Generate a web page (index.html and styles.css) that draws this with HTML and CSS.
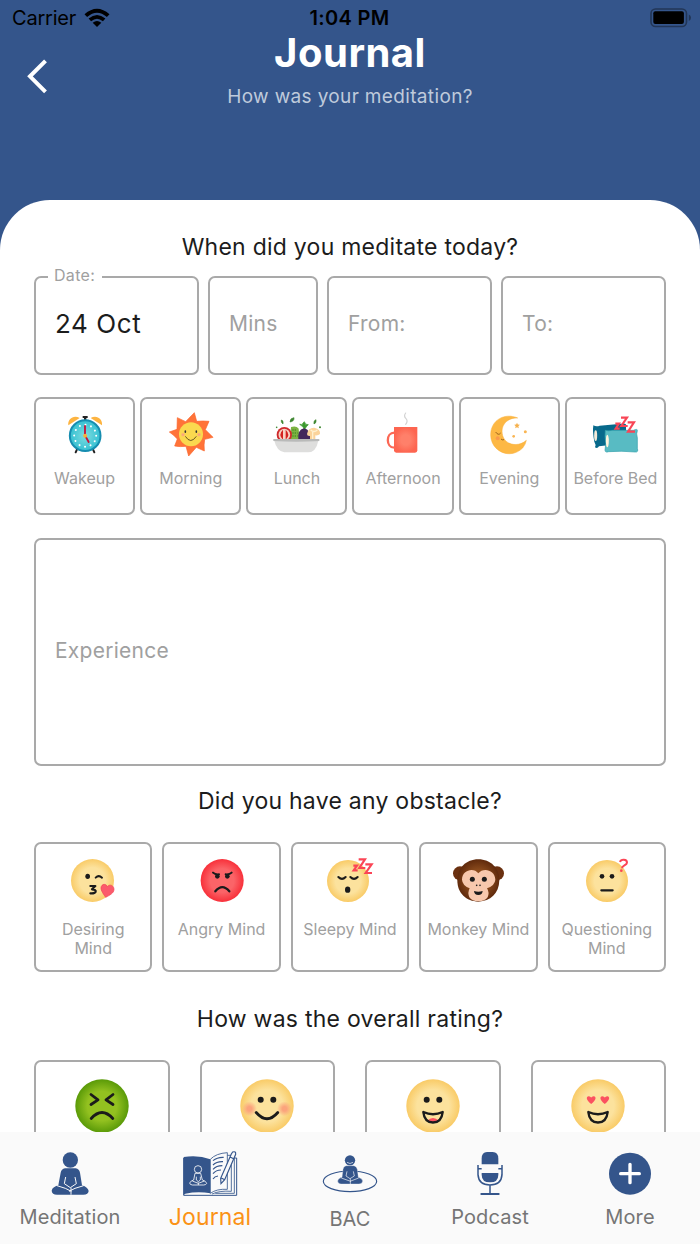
FILE: index.html
```html
<!DOCTYPE html>
<html lang="en">
<head>
  <meta charset="UTF-8" />
  <meta name="viewport" content="width=device-width, initial-scale=1.0" />
  <title>Journal</title>
  <link rel="stylesheet" href="styles.css">
</head>
<body>
  <svg class="defs" width="0" height="0" aria-hidden="true">
    <defs>
      <radialGradient id="yellow"><stop offset="0.6" stop-color="#fce29d" /><stop offset="1" stop-color="#f9cb67" /></radialGradient>
      <radialGradient id="red"><stop offset="0.55" stop-color="#fb6468" /><stop offset="1" stop-color="#f8303a" /></radialGradient>
      <radialGradient id="green"><stop offset="0.55" stop-color="#93c120" /><stop offset="1" stop-color="#5a9a08" /></radialGradient>
      <radialGradient id="blush"><stop offset="0.3" stop-color="#fba47c" /><stop offset="1" stop-color="#fba47c" stop-opacity="0" /></radialGradient>
      <radialGradient id="dial"><stop offset="0" stop-color="#7fdcdf" /><stop offset="1" stop-color="#35c0d2" /></radialGradient>
      <radialGradient id="mug"><stop offset="0.4" stop-color="#ff806a" /><stop offset="1" stop-color="#fd6550" /></radialGradient>
      <radialGradient id="fur"><stop offset="0.5" stop-color="#8a4a1c" /><stop offset="1" stop-color="#602a0c" /></radialGradient>
    </defs>
  </svg>

  <header>
    <div class="status">
      <div class="carrier">
        <span>Carrier</span>
        <svg width="26" height="20" viewBox="0 0 26 20">
          <path d="M0.5 6.2 Q13 -4.8 25.5 6.2 L22.9 9 Q13 0.3 3.1 9 Z" />
          <path d="M4.6 10.5 Q13 3.4 21.4 10.5 L18.9 13.2 Q13 8.2 7.1 13.2 Z" />
          <path d="M8.7 14.8 Q13 11.2 17.3 14.8 L13 19 Z" />
        </svg>
      </div>
      <span class="clock">1:04 PM</span>
      <svg class="battery" width="42" height="20" viewBox="0 0 42 20">
        <rect x="1" y="1" width="35.5" height="17.5" rx="4.5" fill="none" stroke="#223657" stroke-width="1.6" />
        <rect x="3.3" y="3.3" width="30.6" height="12.6" rx="2" />
        <path d="M38.8 6.5 Q41 7.5 41 9.7 Q41 12 38.8 13 Z" fill="#223657" />
      </svg>
    </div>
    <div class="title-row">
      <svg class="back" width="22" height="36" viewBox="0 0 22 36">
        <path d="M19.5 2.8 L4 18.3 L19.5 33.8" fill="none" stroke="#fff" stroke-width="4" />
      </svg>
      <div class="titles">
        <h1>Journal</h1>
        <p>How was your meditation?</p>
      </div>
    </div>
  </header>

  <main>
    <h2>When did you meditate today?</h2>
    <div class="fields">
      <div class="field filled"><span class="label">Date:</span>24 Oct</div>
      <div class="field">Mins</div>
      <div class="field">From:</div>
      <div class="field">To:</div>
    </div>

    <div class="times">
      <div class="card">
        <svg viewBox="89 66 150 138">
          <path d="M140 178 L136 187 M188 178 L192 187" stroke="#222" stroke-width="6" stroke-linecap="round" />
          <path d="M114 106 C111 86 131 73 148 84 Z M215 106 C218 86 198 73 181 84 Z" fill="#fdb441" />
          <path d="M157 78 H172 V84 H168 V91 H161 V84 H157 Z" fill="#222" />
          <circle cx="164.500" cy="137" r="46" fill="url(#dial)" stroke="#168db0" stroke-width="6" />
          <circle cx="164.500" cy="137" r="33" fill="none" stroke="#fff" stroke-width="6" stroke-linecap="round" stroke-dasharray="0.1 17.18" />
          <path d="M164 137 V108 M165 138 L175 156" stroke="#c5133b" stroke-width="5.500" stroke-linecap="round" />
          <circle cx="164.500" cy="137" r="6" fill="#f7b13b" />
        </svg>
        <span>Wakeup</span>
      </div>
      <div class="card">
        <svg viewBox="407 66 150 138">
          <path d="M492 68 L499 94 Q517 92 536 94 L525 119 L548 142 L523 148 Q520 164 522 183 L498 172 L475 198 L467 169 Q449 171 433 168 L441 147 Q431 135 417 126 L440 118 L441 83 L466 95 Q479 81 492 68 Z" fill="#ff7338" stroke="#fa632b" stroke-width="2" stroke-linejoin="round" />
          <circle cx="482" cy="133" r="36" fill="#fad94f" />
          <circle cx="458" cy="134" r="7" fill="url(#blush)" /><circle cx="506" cy="134" r="7" fill="url(#blush)" />
          <ellipse cx="465" cy="125" rx="2.500" ry="4" fill="#333" /><ellipse cx="498" cy="125" rx="2.500" ry="4" fill="#333" />
          <path d="M465 139 Q481 164 498 139" fill="none" stroke="#4a3a18" stroke-width="2.500" />
        </svg>
        <span>Morning</span>
      </div>
      <div class="card">
        <svg viewBox="95 66 150 138">
          <path d="M152 111 Q168 106 175 116 L178 150 H150 Z" fill="#7cb342" />
          <path d="M156 120 h14 M156 129 h16 M156 138 h16" stroke="#4f8f28" stroke-width="4" stroke-dasharray="4 3" />
          <circle cx="132" cy="134" r="23" fill="#cf2a2c" />
          <circle cx="132" cy="134" r="17.500" fill="#f7d3c4" />
          <path d="M128 119 Q112 134 128 149 Z M136 119 Q152 134 136 149 Z" fill="#d4231f" />
          <path d="M191 117 C188 108 183 108 178 103 Q185 101 187 107 Q184 100 192 95 Q198 101 194 107 Q198 100 204 104 Q197 110 194 117 Z" fill="#3c9a2f" stroke="#3c9a2f" stroke-width="2" />
          <path d="M174 150 Q170 120 191 115 Q213 120 209 150 Z" fill="#43275b" />
          <path d="M200 132 Q204 112 222 113 Q241 117 239 132 Q234 137 225 136 V150 H209 V138 Q200 139 200 132 Z" fill="#fbd39a" />
          <path d="M211 120 q10 9 20 0 M217 126 v22" fill="none" stroke="#fff0ce" stroke-width="4" />
          <path d="M149 96 Q149 84 161 83 Q162 94 149 96 M123 90 q7 1 5 12 q-7 -4 -5 -12 M227 89 q-8 2 -6 13 q8 -3 6 -13" fill="#3e8631" stroke="#3e8631" stroke-width="2" />
          <circle cx="109" cy="112" r="2.500" fill="#3e8631" /><circle cx="239" cy="112" r="3" fill="#3e8631" />
          <path d="M102 152 H234 Q227 187 203 187 H132 Q109 183 102 152 Z" fill="#dededd" />
          <path d="M99 147 H237 V153 Q168 158 99 153 Z" fill="#b9bab9" />
        </svg>
        <span>Lunch</span>
      </div>
      <div class="card">
        <svg viewBox="413 66 150 138">
          <path d="M496 69 Q489 78 497 86 Q504 93 496 103" fill="none" stroke="#d2d2d2" stroke-width="3.500" stroke-linecap="round" />
          <path d="M462 128 C436 128 436 173 462 173" fill="none" stroke="#fc6855" stroke-width="7" />
          <path d="M461 111 H531 V181 Q531 188 524 188 H468 Q461 188 461 181 Z" fill="url(#mug)" />
        </svg>
        <span>Afternoon</span>
      </div>
      <div class="card">
        <svg viewBox="87 66 150 138">
          <path d="M188 84 C148 67 107 91 107 134 C107 184 165 211 203 174 Q212 163 214 151 C194 170 153 169 143 137 C134 105 159 82 188 84 Z" fill="#fdb844" stroke="#f9ad35" stroke-width="1.500" />
          <path d="M186 98 l2.500 5.500 6 0.500 -4.500 4.500 1.500 6 -5.500 -3 -5.500 3 1.500 -6 -4.500 -4.500 6 -0.500 Z" fill="#f6b04a" />
          <circle cx="211" cy="125" r="4.500" fill="#f9b553" /><circle cx="176" cy="139" r="4" fill="#f9b553" />
          <circle cx="128" cy="145" r="6" fill="#fa9a4c" />
          <path d="M122 126 Q130 138 137 129 M138 147 Q141 151 147 149" fill="none" stroke="#8a5314" stroke-width="2.500" />
        </svg>
        <span>Evening</span>
      </div>
      <div class="card">
        <svg viewBox="405 66 150 138">
          <path d="M415 106 Q424 111 434 107 L499 101 Q514 98 513 106 V165 Q460 164 432 169 Q427 177 420 172 Q424 164 418 155 Q412 125 415 106 Z" fill="#07698b" />
          <ellipse cx="422" cy="137" rx="4.500" ry="16" fill="#f4ead8" />
          <path d="M451 121 Q460 124 472 121 H535 Q548 115 547 122 Q543 130 547 144 V175 Q551 187 541 186 Q500 182 461 185 Q450 189 450 180 Q455 160 450 140 Z" fill="#58bbc3" stroke="#319eab" stroke-width="2" />
          <ellipse cx="457" cy="153" rx="4.500" ry="19" fill="#fff4dd" />
          <path d="M481 101 h11 l-10 15 h12 M498 83 h18 l-17 25 h19 M518 97 h19 l-18 28 h21" fill="none" stroke="#f84556" stroke-width="6.500" />
        </svg>
        <span>Before Bed</span>
      </div>
    </div>

    <div class="field experience">Experience</div>

    <h2>Did you have any obstacle?</h2>
    <div class="obstacles">
      <div class="card">
        <svg viewBox="105 66 168 144">
          <circle cx="187.500" cy="136.500" r="64.500" fill="url(#yellow)" />
          <ellipse cx="173" cy="124" rx="7" ry="8" fill="#1b1b1b" />
          <path d="M197 128 Q206 119 216 128" fill="none" stroke="#1b1b1b" stroke-width="6" stroke-linecap="round" />
          <path d="M181 153 H196 L186 163 Q199 164 197 170 Q194 176 181 175" fill="none" stroke="#1b1b1b" stroke-width="6.500" stroke-linecap="round" stroke-linejoin="round" />
          <path d="M227 187 C218 174 210 163 214 154 C219 145 229 147 232 155 C239 146 252 151 252 163 C252 175 238 181 227 187 Z" fill="#fb5a6c" stroke="#f2414f" stroke-width="2" />
        </svg>
        <span>Desiring<br>Mind</span>
      </div>
      <div class="card">
        <svg viewBox="490 66 168 144">
          <circle cx="574.500" cy="136.500" r="64.500" fill="url(#red)" />
          <path d="M547 113 Q553 119 565 118 M603 113 Q597 119 585 118" fill="none" stroke="#1b1b1b" stroke-width="6" stroke-linecap="round" />
          <ellipse cx="560" cy="124" rx="7" ry="7" fill="#1b1b1b" /><ellipse cx="590" cy="124" rx="7" ry="7" fill="#1b1b1b" />
          <path d="M554 169 Q575 144 596 169" fill="none" stroke="#1b1b1b" stroke-width="7" stroke-linecap="round" />
        </svg>
        <span>Angry Mind</span>
      </div>
      <div class="card">
        <svg viewBox="111 66 168 144">
          <circle cx="189" cy="138" r="63" fill="url(#yellow)" />
          <path d="M160 126 Q171 137 182 126 M196 126 Q207 137 218 126" fill="none" stroke="#1b1b1b" stroke-width="6" stroke-linecap="round" />
          <ellipse cx="188" cy="164" rx="8" ry="9.500" fill="#1b1b1b" />
          <path d="M205 92 h11 l-10 14 h12 M221 73 h19 l-17 26 h18 M241 88 h19 l-18 26 h19" fill="none" stroke="#fb4556" stroke-width="6.500" />
        </svg>
        <span>Sleepy Mind</span>
      </div>
      <div class="card">
        <svg viewBox="495 66 168 144">
          <circle cx="525" cy="115" r="21" fill="#6a3010" /><circle cx="636" cy="115" r="21" fill="#6a3010" />
          <path d="M580 73 C617 73 643 99 643 136 C642 176 616 199 580 200 C544 199 517 176 517 136 C517 99 543 73 580 73 Z" fill="url(#fur)" />
          <path d="M580 115 C567 96 531 104 531 134 Q532 151 554 160 Q547 173 553 187 Q561 199 580 199 Q600 199 608 187 Q614 172 606 160 Q630 151 631 134 C630 104 594 96 580 115 Z" fill="#f7c8ad" />
          <circle cx="562" cy="133" r="7.500" fill="#1b1b1b" /><circle cx="598" cy="133" r="7.500" fill="#1b1b1b" />
          <circle cx="575" cy="151" r="2.500" fill="#1b1b1b" /><circle cx="585" cy="151" r="2.500" fill="#1b1b1b" />
          <path d="M567 168 Q580 172 593 168 Q592 180 580 180 Q568 180 567 168 Z" fill="#1b1b1b" />
        </svg>
        <span>Monkey Mind</span>
      </div>
      <div class="card">
        <svg viewBox="880 66 168 144">
          <circle cx="964" cy="138" r="63" fill="url(#yellow)" />
          <circle cx="949" cy="124" r="7" fill="#1b1b1b" /><circle cx="979" cy="124" r="7" fill="#1b1b1b" />
          <path d="M947 166 H981" stroke="#1b1b1b" stroke-width="6.500" stroke-linecap="round" />
          <path d="M1003 81 C1006 72 1024 72 1024 83 C1023 92 1009 91 1009 100" fill="none" stroke="#fb4556" stroke-width="6" />
          <circle cx="1007" cy="107" r="4" fill="#fb4556" />
        </svg>
        <span>Questioning<br>Mind</span>
      </div>
    </div>

    <h2>How was the overall rating?</h2>
    <div class="ratings">
      <div class="card">
        <svg viewBox="0 0 56 56">
          <circle cx="28" cy="28" r="26.700" fill="url(#green)" />
          <path d="M17 16.500 L24 21.800 L17 26.500 M39 16.500 L32 21.800 L39 26.500 M17.200 40.500 Q28 28.500 38.800 40.500" class="line" />
        </svg>
      </div>
      <div class="card">
        <svg viewBox="0 0 56 56">
          <circle cx="28" cy="28" r="26.700" fill="url(#yellow)" />
          <circle cx="10.500" cy="30.800" r="7.500" fill="url(#blush)" /><circle cx="45.500" cy="30.800" r="7.500" fill="url(#blush)" />
          <circle cx="21.700" cy="21.700" r="3" /><circle cx="34.300" cy="21.700" r="3" />
          <path d="M17.200 34.500 Q28 47 38.800 34.500" class="line" />
        </svg>
      </div>
      <div class="card">
        <svg viewBox="0 0 56 56">
          <circle cx="28" cy="28" r="26.700" fill="url(#yellow)" />
          <circle cx="21.700" cy="21.700" r="3" /><circle cx="34.300" cy="21.700" r="3" />
          <path d="M22 43 Q28 37 34 43 Q28 46 22 43 Z" fill="#fb5160" />
          <path d="M18.300 34 Q28 38.500 37.700 34 Q36.500 44.500 28 44.500 Q19.500 44.500 18.300 34 Z" class="line mouth" />
        </svg>
      </div>
      <div class="card">
        <svg viewBox="0 0 56 56">
          <circle cx="28" cy="28" r="26.700" fill="url(#yellow)" />
          <path d="M21.200 26 C14 21 17 16 21.200 19.500 C25.400 16 28.400 21 21.200 26 Z M34.800 26 C27.600 21 30.600 16 34.800 19.500 C39 16 42 21 34.800 26 Z" fill="#fb5160" />
          <path d="M18.300 34 Q28 38.500 37.700 34 Q36.500 44.500 28 44.500 Q19.500 44.500 18.300 34 Z" class="line mouth" />
        </svg>
      </div>
    </div>
  </main>

  <nav>
    <a>
      <svg viewBox="120 60 180 144">
        <circle cx="211" cy="90" r="23" />
        <path d="M195 115 H227 Q238 117 240 128 L246 166 Q264 172 266 183 Q265 194 250 194 H171 Q156 194 155 182 Q157 171 175 166 L182 128 Q184 117 195 115 Z" />
        <path d="M197 141 L193 161 L211 173 L229 161 L225 141 M171 167 L196 175 L214 184 M251 167 L225 175 L207 184 M213 173 V194" class="cut" />
      </svg>
      <span>Meditation</span>
    </a>
    <a class="active">
      <svg viewBox="540 60 180 144">
        <path d="M551 84 V196 H710 V84 H700" fill="none" stroke="#34558b" stroke-width="3" />
        <path d="M551 81 Q595 74 631 88 V190 Q595 183 556 191 L551 195 Z" />
        <path d="M631 88 Q648 70 682 68 V178 Q650 176 631 190 Z M682 76 H694 V184 Q660 181 636 192 M694 82 H703 V190 H646" fill="#fafafa" stroke="#34558b" stroke-width="2.500" />
        <path d="M639 92 Q652 81 671 82 M639 105 Q650 94 669 95 M639 118 Q649 107 667 107 M639 131 Q648 120 663 120 M639 147 Q644 139 654 138" fill="none" stroke="#34558b" stroke-width="3.500" />
        <path d="M698 66 Q708 63 707 73 L674 149 L663 161 L662 145 L694 72 Z M664 144 L674 149 M690 81 L701 86" fill="#fafafa" stroke="#34558b" stroke-width="3.500" />
        <g fill="none" stroke="#fafafa" stroke-width="2.500">
          <circle cx="594" cy="118" r="11" />
          <path d="M585 130 H602 L607 150 Q618 153 620 160 Q618 165 611 165 H577 Q569 164 569 159 Q572 152 581 150 Z M589 140 V150 L595 155 L601 150 V140 M577 153 L595 160 L613 153 M595 158 V165" />
        </g>
      </svg>
      <span>Journal</span>
    </a>
    <a class="bac">
      <svg viewBox="60 60 180 144">
        <ellipse cx="150" cy="154" rx="80" ry="31" fill="none" stroke="#34558b" stroke-width="3.500" />
        <circle cx="150" cy="91" r="15.500" />
        <path d="M138 107 H162 Q170 109 172 118 L175 142 Q187 146 188 153 Q187 162 177 162 H123 Q113 161 113 153 Q114 145 126 142 L129 118 Q130 109 138 107 Z" stroke="#fafafa" stroke-width="1" />
        <path d="M141 97 Q150 104 159 97 M141 124 L138 138 L150 146 L163 138 L160 124 M124 144 L152 154 M176 144 L150 154 M151 146 V162" class="cut thin" />
      </svg>
      <span>BAC</span>
    </a>
    <a>
      <svg viewBox="480 60 180 144">
        <path d="M545 103 V86 Q545 66 561 66 H578 Q595 66 595 86 V103 Z" />
        <path d="M545 129 H595 V134 Q595 157 570 157 Q545 157 545 134 Z" />
        <path d="M534 105 V134 Q536 165 570 165 Q604 165 606 134 V105 M534 116 H545 M606 116 H595 M570 165 V191" fill="none" stroke="#34558b" stroke-width="4.500" />
        <path d="M544 192 H596" stroke="#34558b" stroke-width="6" stroke-linecap="round" />
      </svg>
      <span>Podcast</span>
    </a>
    <a>
      <svg viewBox="900 60 180 144">
        <circle cx="990" cy="131" r="63" />
        <path d="M990 103 V158 M962 131 H1018" stroke="#fff" stroke-width="10" stroke-linecap="round" />
      </svg>
      <span>More</span>
    </a>
  </nav>
</body>
</html>
```
FILE: styles.css
```css
* {
  box-sizing: border-box;
}
body {
  margin: 0;
  height: 1244px;
  display: flex;
  flex-direction: column;
  overflow: hidden;
  background: #34558b;
  color: #1c1c1c;
  font-family: Inter, Roboto, sans-serif;
}
.defs {
  position: absolute;
}
header {
  height: 200px;
  flex: none;
}
.status {
  display: grid;
  grid-template-columns: 1fr auto 1fr;
  align-items: center;
  height: 36px;
  padding: 0 8px 0 12px;
  color: #000;
  font-size: 20px;
}
.carrier {
  display: flex;
  align-items: center;
  gap: 8px;
  letter-spacing: -0.2px;
}
.clock {
  margin-right: 5px;
  font-weight: 600;
  letter-spacing: 0.3px;
}
.battery {
  justify-self: end;
}
.title-row {
  display: grid;
  grid-template-columns: 60px 1fr 60px;
}
.back {
  margin: 22px 0 0 26px;
}
.titles {
  text-align: center;
}
h1 {
  margin: 0;
  color: #fff;
  font-size: 40px;
  line-height: 34px;
  font-weight: 700;
  letter-spacing: 0.5px;
}
.titles p {
  margin: 15px 0 0;
  color: #bfcadb;
  font-size: 19px;
  line-height: 24px;
  letter-spacing: 0.35px;
}

main {
  flex: 1;
  min-height: 0;
  overflow: hidden;
  padding: 32px 34px 0;
  background: #fff;
  border-radius: 50px 50px 0 0;
}
h2 {
  margin: 0;
  font-size: 23px;
  line-height: 30px;
  font-weight: 400;
  text-align: center;
  letter-spacing: 0.25px;
}
.fields {
  display: grid;
  grid-template-columns: 3fr 2fr 3fr 3fr;
  gap: 9px;
  margin: 14px 0 22px;
}
.field {
  position: relative;
  display: flex;
  align-items: center;
  height: 99px;
  padding: 0 0 4px 19px;
  border: 2px solid #a9a9a9;
  border-radius: 7px;
  color: #a0a0a0;
  font-size: 21px;
  letter-spacing: 0.25px;
}
.filled {
  color: #1c1c1c;
  font-size: 26px;
  letter-spacing: 0.6px;
}
.label {
  position: absolute;
  top: -13px;
  left: 12px;
  padding: 0 7px 0 6px;
  background: #fff;
  color: #a0a0a0;
  font-size: 16px;
  line-height: 20px;
  letter-spacing: 0.3px;
}
.times {
  display: grid;
  grid-template-columns: repeat(6, 1fr);
  gap: 5px;
}
.card {
  display: flex;
  flex-direction: column;
  align-items: center;
  border: 2px solid #a9a9a9;
  border-radius: 7px;
  color: #a0a0a0;
  font-size: 16px;
  line-height: 18.5px;
  text-align: center;
}
.times .card {
  height: 118px;
  padding-top: 13px;
  white-space: nowrap;
}
.times svg {
  width: 50px;
  height: 46px;
  margin-bottom: 11px;
}
.experience {
  height: 228px;
  margin: 23px 0 20px;
}
.obstacles {
  display: grid;
  grid-template-columns: repeat(5, 1fr);
  gap: 10px;
  margin: 26px 0 32px;
}
.obstacles .card {
  height: 130px;
  padding-top: 13px;
}
.obstacles svg {
  width: 56px;
  height: 48px;
  margin-bottom: 15px;
}
.ratings {
  display: grid;
  grid-template-columns: repeat(4, 1fr);
  gap: 30px;
  margin-top: 26px;
}
.ratings .card {
  height: 130px;
  padding-top: 16px;
}
.ratings svg {
  width: 56px;
  height: 56px;
  fill: #1b1b1b;
}
.line {
  fill: none;
  stroke: #1b1b1b;
  stroke-width: 2.8;
  stroke-linecap: round;
  stroke-linejoin: round;
}
.mouth {
  stroke-width: 2.3;
}

nav {
  flex: none;
  display: grid;
  grid-template-columns: repeat(5, 1fr);
  height: 112px;
  padding-top: 18px;
  background: #fafafa;
}
nav a {
  display: flex;
  flex-direction: column;
  align-items: center;
  color: #757575;
  font-size: 20px;
  line-height: 24px;
  letter-spacing: 0.1px;
}
nav svg {
  width: 60px;
  height: 48px;
  margin-bottom: 7px;
  fill: #34558b;
}
.cut {
  fill: none;
  stroke: #fafafa;
  stroke-width: 3;
}
.thin {
  stroke-width: 2;
}
.active {
  color: #fb9216;
  font-size: 23px;
}
.bac span {
  padding-top: 2px;
}
```
